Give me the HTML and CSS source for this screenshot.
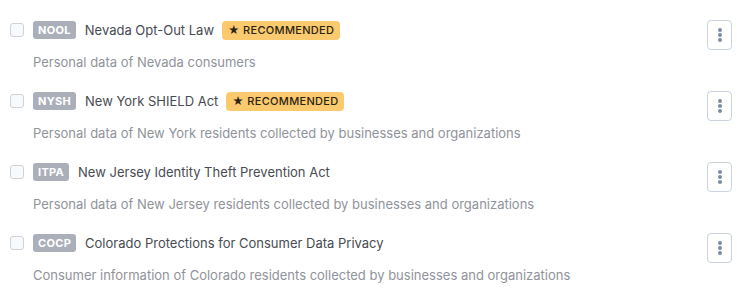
FILE: index.html
```html
<!DOCTYPE html>
<html lang="en">
<head>
<meta charset="utf-8">
<link rel="stylesheet" href="styles.css">
</head>
<body>
<ul class="list">
  <li class="item">
    <div class="head">
      <div class="main">
        <span class="check"></span>
        <span class="code">NOOL</span>
        <span class="title">Nevada Opt-Out Law</span>
        <span class="rec">★ RECOMMENDED</span>
      </div>
      <button class="more"><span class="dot"></span><span class="dot"></span><span class="dot"></span></button>
    </div>
    <p class="desc">Personal data of Nevada consumers</p>
  </li>
  <li class="item">
    <div class="head">
      <div class="main">
        <span class="check"></span>
        <span class="code">NYSH</span>
        <span class="title">New York SHIELD Act</span>
        <span class="rec">★ RECOMMENDED</span>
      </div>
      <button class="more"><span class="dot"></span><span class="dot"></span><span class="dot"></span></button>
    </div>
    <p class="desc">Personal data of New York residents collected by businesses and organizations</p>
  </li>
  <li class="item">
    <div class="head">
      <div class="main">
        <span class="check"></span>
        <span class="code">ITPA</span>
        <span class="title">New Jersey Identity Theft Prevention Act</span>
      </div>
      <button class="more"><span class="dot"></span><span class="dot"></span><span class="dot"></span></button>
    </div>
    <p class="desc">Personal data of New Jersey residents collected by businesses and organizations</p>
  </li>
  <li class="item">
    <div class="head">
      <div class="main">
        <span class="check"></span>
        <span class="code">COCP</span>
        <span class="title">Colorado Protections for Consumer Data Privacy</span>
      </div>
      <button class="more"><span class="dot"></span><span class="dot"></span><span class="dot"></span></button>
    </div>
    <p class="desc">Consumer information of Colorado residents collected by businesses and organizations</p>
  </li>
</ul>
</body>
</html>
```
FILE: styles.css
```css
html, body {
  margin: 0;
  padding: 0;
  background: #ffffff;
}
body {
  font-family: Inter, "Noto Sans", sans-serif;
  color: #3f4349;
}
.list {
  list-style: none;
  margin: 0;
  padding: 20px 13px 0 10px;
  display: flex;
  flex-direction: column;
  gap: 20px;
}
.item {
  display: flex;
  flex-direction: column;
}
.head {
  display: flex;
  align-items: flex-start;
  height: 30px;
}
.main {
  display: flex;
  align-items: center;
  height: 20px;
}
.check {
  width: 12px;
  height: 12px;
  border: 1px solid #cdd3dc;
  border-radius: 3px;
  background: #f8f9fb;
  margin-right: 9px;
  flex: none;
}
.code {
  background: #abafb9;
  color: #ffffff;
  font-size: 11px;
  font-weight: 700;
  letter-spacing: 0.3px;
  line-height: 18px;
  height: 18px;
  padding: 0 5px;
  border-radius: 3px;
  margin-right: 9px;
}
.title {
  font-size: 13px;
  color: #474b52;
  margin-right: 8px;
}
.rec {
  background: #fcca6e;
  color: #2a2414;
  font-size: 11px;
  font-weight: 500;
  letter-spacing: 0.3px;
  line-height: 19px;
  height: 19px;
  padding: 0 6px;
  border-radius: 4px;
}
.more {
  margin-left: auto;
  width: 25px;
  height: 30px;
  border: 1px solid #c9d3de;
  border-radius: 4px;
  background: #ffffff;
  padding: 0;
  display: flex;
  flex-direction: column;
  align-items: center;
  justify-content: center;
  gap: 1px;
}
.dot {
  width: 4px;
  height: 4px;
  border-radius: 50%;
  background: #7b8ca3;
}
.desc {
  margin: 3px 0 0 23px;
  font-size: 13px;
  line-height: 18px;
  color: #8f939a;
}
```
